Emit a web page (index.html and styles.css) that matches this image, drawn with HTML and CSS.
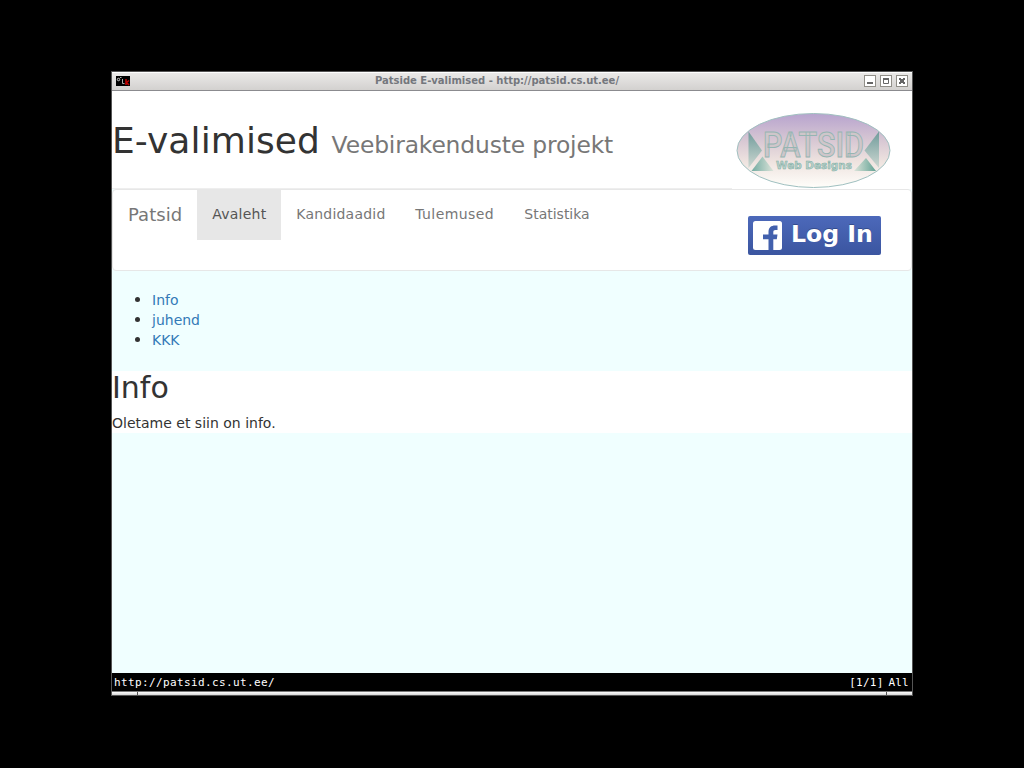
FILE: index.html
```html
<!DOCTYPE html>
<html lang="et">
<head>
<meta charset="utf-8">
<title>Patside E-valimised</title>
<link rel="stylesheet" href="styles.css">
</head>
<body>
<div class="window">
  <div class="titlebar">
    <svg class="app-icon" width="14" height="10" viewBox="0 0 14 10"><rect width="14" height="10" fill="#000"/><path d="M1 3l2-1 1 2-2 1zM4 1.500h1.500M6.500 3v4.500h2" fill="none" stroke="#aaa"/><path d="M10 3v6M13 4.500l-2.500 2 2.500 2.500" fill="none" stroke="#c00000" stroke-width="1.500"/></svg>
    <span class="window-title">Patside E-valimised - http://patsid.cs.ut.ee/</span>
    <div class="controls">
      <svg width="12" height="12"><rect x=".5" y=".5" width="11" height="11" fill="#fff" stroke="#918f89"/><path d="M3 8h6" stroke="#666" stroke-width="2"/></svg>
      <svg width="12" height="12"><rect x=".5" y=".5" width="11" height="11" fill="#fff" stroke="#918f89"/><path d="M3.5 4v4.500h5V4M3 4h6" fill="none" stroke="#666"/><path d="M3 4h6" stroke="#666" stroke-width="2"/></svg>
      <svg width="12" height="12"><rect x=".5" y=".5" width="11" height="11" fill="#fff" stroke="#918f89"/><path d="M3 3h2v1h2V3h2v2H8v2h1v2H7V8H5v1H3V7h1V5H3z" fill="#666"/></svg>
    </div>
  </div>
  <div class="page">
    <header class="header">
      <h1 class="page-title">E-valimised <small>Veebirakenduste projekt</small></h1>
      <svg class="logo" width="155" height="76" viewBox="0 0 155 76">
        <defs>
          <linearGradient id="sky" x1="0" y1="0" x2="0" y2="1"><stop offset="0" stop-color="#b7a3ce"/><stop offset=".35" stop-color="#d6c6d3"/><stop offset=".65" stop-color="#eee3df"/><stop offset="1" stop-color="#fffefa"/></linearGradient>
          <linearGradient id="down" x1="0" y1="0" x2="0" y2="1"><stop offset="0" stop-color="#6f9b9b"/><stop offset="1" stop-color="#ced8d2"/></linearGradient>
          <linearGradient id="base-left"><stop offset="0" stop-color="#72aaa0"/><stop offset="1" stop-color="#dce4da"/></linearGradient>
          <linearGradient id="base-right"><stop offset="0" stop-color="#dce4da"/><stop offset="1" stop-color="#62a294"/></linearGradient>
        </defs>
        <ellipse cx="77.500" cy="38.500" rx="76.500" ry="37" fill="url(#sky)" stroke="#a0c0c0"/>
        <path d="M12.500 19.500L26 38.500 12.500 56z" fill="url(#down)"/>
        <path d="M143 19.500V56L128.500 38.500z" fill="url(#down)"/>
        <path d="M26.500 44.500L37.500 59h-22z" fill="url(#base-left)"/>
        <path d="M130 46L140 59h-22z" fill="url(#base-right)"/>
        <text class="logo-name" x="27" y="45" textLength="101" lengthAdjust="spacingAndGlyphs">PATSID</text>
        <text class="logo-tag" x="40" y="57" textLength="76" lengthAdjust="spacingAndGlyphs">Web Designs</text>
      </svg>
    </header>
    <nav class="navbar">
      <a class="brand">Patsid</a>
      <a class="nav-link active">Avaleht</a>
      <a class="nav-link candidates">Kandidaadid</a>
      <a class="nav-link results">Tulemused</a>
      <a class="nav-link">Statistika</a>
      <a class="login">
        <svg width="29" height="29" viewBox="0 0 29 29"><rect width="29" height="29" rx="2.500" fill="#fff"/><path d="M15.500 29V18.200H10v-4.600h5.500V11c0-4.500 2.800-6.500 6.500-6.500h2.500V9h-2c-1.600 0-2.200.8-2.200 2.400v2.200h4.200l-.7 4.600h-3.500V29z" fill="#4260ad"/></svg>
        <span>Log In</span>
      </a>
    </nav>
    <ul class="side-menu">
      <li><a>Info</a></li>
      <li><a>juhend</a></li>
      <li><a>KKK</a></li>
    </ul>
    <main class="content">
      <h2>Info</h2>
      <p>Oletame et siin on info.</p>
    </main>
  </div>
  <footer class="status"><span>http://patsid.cs.ut.ee/</span><span class="position">[1/1] All</span></footer>
  <div class="handle"><i></i><i></i><i></i></div>
</div>
</body>
</html>
```
FILE: styles.css
```css
* { box-sizing: border-box; }
body {
  margin: 0;
  height: 768px;
  background: #000;
  padding: 71px 0 0 111px;
  font: 14px/20px "DejaVu Sans", sans-serif;
  color: #333;
  overflow: hidden;
}
.window {
  width: 802px;
  height: 625px;
  border: 1px solid #555;
  display: flex;
  flex-direction: column;
}
.titlebar {
  height: 19px;
  display: flex;
  align-items: flex-start;
  padding: 3px 4px 0;
  border-top: 1px solid #fff;
  border-bottom: 1px solid #8b8b8f;
  background: linear-gradient(#eae9e8, #d3d1cf);
}
.app-icon { display: block; }
.window-title {
  flex: 1;
  text-align: center;
  font-size: 10px;
  line-height: 10px;
  font-weight: bold;
  color: #74777d;
}
.controls { display: flex; gap: 4px; margin-top: -1px; }
.controls svg { display: block; }
.page { height: 582px; background: #f0ffff; }
.header {
  height: 98px;
  display: flex;
  background: #fff;
}
.page-title {
  width: 620px;
  margin: 0;
  padding-top: 30px;
  border-bottom: 1px solid #eee;
  font-size: 36px;
  line-height: 40px;
  font-weight: 500;
  letter-spacing: .1px;
  white-space: nowrap;
}
.page-title small {
  font-size: 23.4px;
  font-weight: 400;
  line-height: 1;
  letter-spacing: -.15px;
  color: #777;
}
.logo { display: block; margin: 21px 0 0 4px; }
.logo-name {
  font: 500 35px "Roboto", sans-serif;
  fill: #cfc6ca;
  stroke: #95b5b2;
  stroke-width: .9;
}
.logo-tag {
  font: bold 11px "DejaVu Sans", sans-serif;
  fill: #b9d0c9;
  stroke: #7eaea5;
  stroke-width: .5;
}
.navbar {
  height: 82px;
  display: flex;
  border: 1px solid #e7e7e7;
  border-radius: 4px;
  background: #fff;
  color: #777;
}
.brand { padding: 15px; font-size: 18px; letter-spacing: .05px; }
.nav-link { height: 50px; padding: 14px 15px 16px; }
.active { width: 84px; background: #e7e7e7; color: #555; letter-spacing: .25px; }
.candidates { width: 119px; letter-spacing: .22px; }
.results { width: 109px; letter-spacing: .4px; }
.login {
  width: 133px;
  height: 39px;
  margin: 26px 30px 0 auto;
  padding-left: 5px;
  display: flex;
  align-items: center;
  gap: 9px;
  border-radius: 2px;
  background: linear-gradient(#4c69ba, #3b55a0);
  color: #fff;
  font-size: 23.6px;
  font-weight: bold;
  white-space: nowrap;
  text-shadow: 0 -1px 0 #354c8c;
}
.login span { padding-bottom: 3px; }
.side-menu { margin: 0; padding: 19px 0 21px 40px; }
.side-menu li::marker { font-size: 16px; }
.side-menu a { color: #337ab7; }
.content { height: 62px; background: #fff; }
.content h2 { margin: 0; font-size: 30px; line-height: 33px; font-weight: 500; }
.content p { margin: 0; padding-top: 9px; }
.status {
  height: 18px;
  display: flex;
  justify-content: space-between;
  padding: 1px 3px 0 2px;
  background: #000;
  color: #fff;
  font: 11px/17px "DejaVu Sans Mono", monospace;
  letter-spacing: .38px;
}
.position { word-spacing: -2px; letter-spacing: .25px; }
.handle {
  height: 4px;
  display: grid;
  grid-template-columns: 25px 1fr 25px;
  gap: 1px;
  border-top: 1px solid #777;
  background: #555;
}
.handle i { background: linear-gradient(#fff, #d5d5d5); }
```
